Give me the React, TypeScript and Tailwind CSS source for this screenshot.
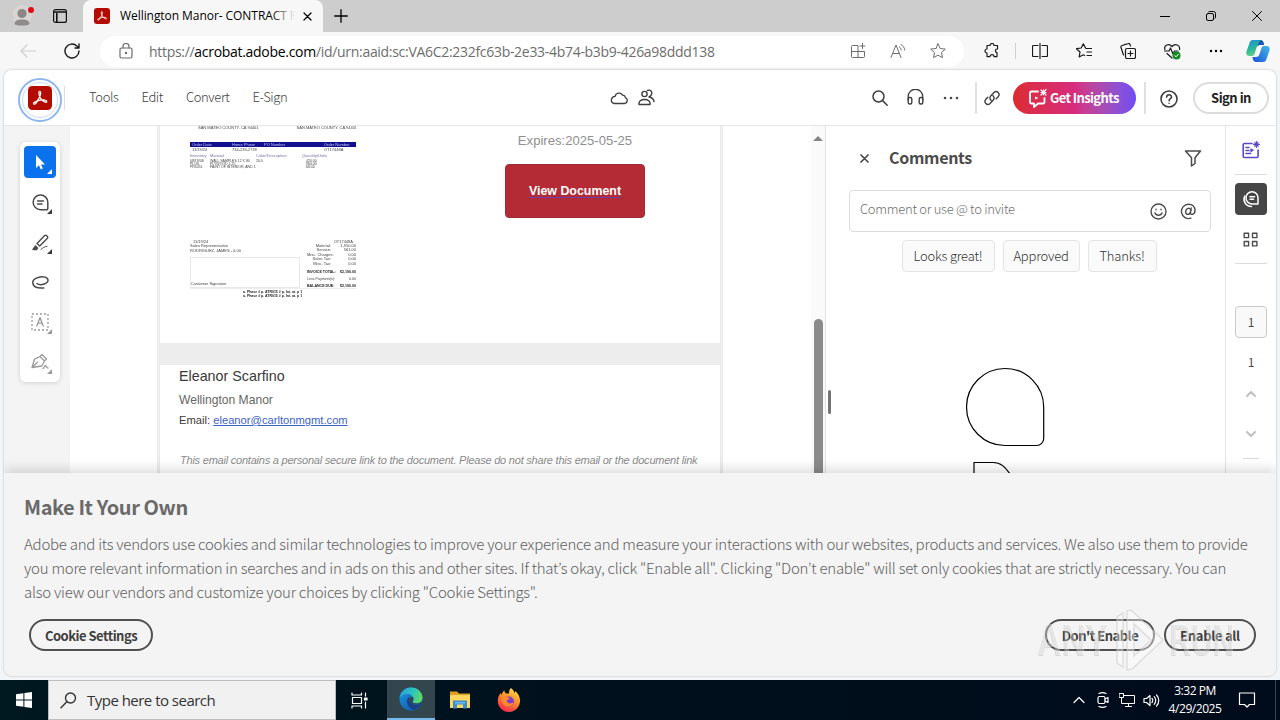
import type { ReactNode } from "react";
import { ChevronDown, ChevronUp } from "lucide-react";

type IconProps = {
  size?: number;
  box?: string;
  stroke?: number;
  className?: string;
  children: ReactNode;
};

function Icon({ size = 16, box = "0 0 16 16", stroke = 1.2, className = "", children }: IconProps) {
  return (
    <svg
      width={size}
      height={size}
      viewBox={box}
      fill="none"
      stroke="currentColor"
      strokeWidth={stroke}
      strokeLinecap="round"
      strokeLinejoin="round"
      className={`shrink-0 ${className}`}
    >
      {children}
    </svg>
  );
}

function Slot({ className = "w-11", children }: { className?: string; children?: ReactNode }) {
  return <div className={`flex shrink-0 items-center justify-center ${className}`}>{children}</div>;
}

function AcrobatLogo({ size }: { size: number }) {
  return (
    <svg width={size} height={size} viewBox="0 0 24 24" className="shrink-0">
      <rect width="24" height="24" rx="4.5" fill="#b30b00" />
      <path
        d="M11.6 5.4C10.5 5.4 10.7 8.6 12.3 11.8C13.8 14.8 17 16.8 18.5 16.1C19.5 15.2 17.8 13.9 15 13.9C11.5 13.9 6.4 15.5 5.6 17.1C5.2 18.5 7 19 8.6 16.4C10.4 13.4 12.6 9.3 12.7 7.1C12.7 6 12.3 5.4 11.6 5.4Z"
        fill="none"
        stroke="#fff"
        strokeWidth="1.25"
      />
    </svg>
  );
}

function TabStrip() {
  return (
    <div className="flex h-8 shrink-0 bg-[#cdcdcd] text-black">
      <div className="flex w-[83px] items-center pl-[13px]">
        <svg width="24" height="26" viewBox="0 0 24 26">
          <circle cx="9" cy="12" r="10" fill="#d9d5d3" />
          <circle cx="9" cy="10.5" r="4.6" fill="#8a8786" />
          <path d="M1.5 21c0-3.2 3-4.5 7.5-4.5s7.5 1.3 7.5 4.5c-2 2-13 2-15 0z" fill="#8f8b8a" />
          <circle cx="18" cy="7" r="3" fill="#e30b16" />
        </svg>
        <svg width="14" height="14" viewBox="0 0 14 14" fill="none" stroke="#111" className="ml-4">
          <rect x=".6" y=".6" width="12.8" height="12.8" rx="2" strokeWidth="1.2" />
          <path d="M1 3h12M3.8 4v9" strokeWidth="1.6" />
        </svg>
      </div>
      <div className="flex w-[240px] items-center rounded-t-lg bg-[#f7f7f7] pl-[11px]">
        <AcrobatLogo size={16} />
        <div className="relative ml-[10px] w-[175px] overflow-hidden whitespace-nowrap text-[12px] tracking-[-0.06px]">
          Wellington Manor- CONTRACT F
          <div className="absolute inset-y-0 right-0 w-6 bg-gradient-to-r from-transparent to-[#f7f7f7]" />
        </div>
        <Icon size={9} box="0 0 9 9" stroke={1.3} className="ml-2">
          <path d="M1 1l7 7M8 1l-7 7" />
        </Icon>
      </div>
      <Slot className="w-[35px]">
        <Icon size={14} box="0 0 14 14" stroke={1.3}>
          <path d="M7 .7v12.6M.7 7h12.6" />
        </Icon>
      </Slot>
      <div className="flex-1" />
      <Slot className="w-[46px]">
        <Icon size={10} box="0 0 10 10" stroke={1}>
          <path d="M0 5.5h10" />
        </Icon>
      </Slot>
      <Slot className="w-[46px]">
        <Icon size={10} box="0 0 10 10" stroke={1}>
          <rect x=".5" y="2.5" width="7" height="7" rx="1.5" />
          <path d="M2.5 1C3 .5 3.5.5 4 .5h3.5a2 2 0 0 1 2 2V6c0 .5-.2 1-.6 1.4" />
        </Icon>
      </Slot>
      <Slot className="w-[46px]">
        <Icon size={10} box="0 0 10 10" stroke={1}>
          <path d="M.5.5l9 9M9.5.5l-9 9" />
        </Icon>
      </Slot>
    </div>
  );
}

function AddressBar() {
  return (
    <div className="flex h-[38px] shrink-0 items-center bg-[#f7f7f7] text-[#1a1a1a]">
      <Slot className="w-[56px]">
        <Icon className="text-[#cfcfcf]">
          <path d="M15.5 8H1M7 2L1 8l6 6" />
        </Icon>
      </Slot>
      <Slot className="mr-[12px] w-8">
        <Icon stroke={1.4}>
          <path d="M15 8a7 7 0 1 1-2.2-5.100L15 5M15 1v4h-4" />
        </Icon>
      </Slot>
      <div className="flex h-[31px] w-[864px] items-center rounded-full bg-white pl-[19px] text-[#6d6d6d]">
        <Icon size={14} box="0 0 14 16" className="h-4">
          <rect x="1" y="5" width="12" height="10" rx="1.5" />
          <path d="M4 5V3.500a3 3 0 0 1 6 0V5" />
          <circle cx="7" cy="10" r=".6" fill="currentColor" />
        </Icon>
        <div className="ml-4 flex-1 whitespace-nowrap text-[14px] tracking-[-0.3px]">
          https://<span className="text-black">acrobat.adobe.com</span>
          /id/urn:aaid:sc:VA6C2:232fc63b-2e33-4b74-b3b9-426a98ddd138
        </div>
        <Slot className="w-10">
          <Icon stroke={1}>
            <path d="M8 14.5V2.5H2.500a1 1 0 0 0-1 1v10a1 1 0 0 0 1 1h11a1 1 0 0 0 1-1V8.500H1.500M12.500.5v5M10 3h5" />
          </Icon>
        </Slot>
        <Slot className="w-10">
          <Icon stroke={1}>
            <path d="M1 14.5L6 2l5 12.5M2.700 10.5h6.600M9.500 4c1 .6 1.500 1.500 1.600 3M11 1.500c2 1 3.500 3 3.800 5.500" />
          </Icon>
        </Slot>
        <Slot className="mr-[6px] w-10">
          <Icon stroke={1}>
            <path d="M8 .8l2.200 4.700 5.100.6-3.800 3.500 1 5.100L8 12.200l-4.500 2.500 1-5.100L.7 6.100l5.100-.6z" />
          </Icon>
        </Slot>
      </div>
      <Slot className="w-[51px] pl-1">
        <Icon>
          <path d="M3 2.500h3a2 2 0 0 1 4 0h3.500V6a1.700 1.700 0 0 0-.5 3.600v4H10a2 2 0 0 0-4 0H3V10a2 2 0 0 1 0-4z" />
        </Icon>
      </Slot>
      <div className="h-4 w-px bg-[#cfcfcf]" />
      <div className="w-[2px]" />
      <Slot>
        <Icon>
          <path d="M6 2.500H1.500a1 1 0 0 0-1 1v9a1 1 0 0 0 1 1H6M10 2.500h4.500a1 1 0 0 1 1 1v9a1 1 0 0 1-1 1H10M8 .5v15" />
        </Icon>
      </Slot>
      <Slot>
        <Icon>
          <path d="M10 5.500h5.500M11 9h4.500M11 12.500h4.500M9.500 5L7.300.8 5.200 5l-4.700.7L4 9l-.9 5 4.200-2.200L8.500 12.500" />
        </Icon>
      </Slot>
      <Slot>
        <Icon>
          <rect x="5.5" y="5.5" width="10" height="10" rx="1.5" />
          <path d="M10.500 8v5M8 10.500h5M3.500 12L1 4.500a1.500 1.500 0 0 1 1-2L8 .6a1.500 1.500 0 0 1 2 1l.5 1.400" />
        </Icon>
      </Slot>
      <Slot>
        <Icon size={17} box="0 0 17 17">
          <path d="M1 6.500C-.5 2 5 0 8 3.500 11 0 16.500 2 15.500 6.500M.5 8H5l1.500-3 2.500 6 1.500-3H14M3 10.500l5 4.500" />
          <circle cx="12.5" cy="12.5" r="4" fill="#168a24" stroke="none" />
          <path d="M10.800 12.600l1.300 1.200 2.200-2.500" stroke="#fff" strokeWidth="1" />
        </Icon>
      </Slot>
      <Slot>
        <svg width="14" height="4" viewBox="0 0 14 4">
          <circle cx="2" cy="2" r="1.2" />
          <circle cx="7" cy="2" r="1.2" />
          <circle cx="12" cy="2" r="1.2" />
        </svg>
      </Slot>
      <Slot className="w-[40px]">
        <svg width="24" height="24" viewBox="0 0 24 24">
          <defs>
            <linearGradient id="copA" x1="0" y1="0" x2=".3" y2="1">
              <stop offset="0" stopColor="#1b8fd2" />
              <stop offset=".6" stopColor="#2bb89a" />
              <stop offset="1" stopColor="#5fcf8a" />
            </linearGradient>
            <linearGradient id="copB" x1="1" y1="0" x2="0" y2="1">
              <stop offset="0" stopColor="#42b8e8" />
              <stop offset="1" stopColor="#1a53d8" />
            </linearGradient>
          </defs>
          <path d="M7 1h7.500c1.600 0 2.500 1 3 2.500L18 6h-4c-2 0-3 1-3.600 3L8.500 15c-.5 1.600-1.500 2-3 2H3.500C.8 17-.2 15 .5 12.500l3-8.500C4 2.300 5 1 7 1z" fill="url(#copA)" />
          <path d="M17 23H10c-1.600 0-2.500-1-3-2.500L6.400 18H10c2 0 3-1 3.600-3l1.900-6c.5-1.600 1.500-2 3-2h2c2.700 0 3.700 2 3 4.500l-3 8.500c-.5 1.700-1.500 3-3.500 3z" fill="url(#copB)" />
          <path d="M14 1.200c2 0 3 .8 3.500 2.300L18 6h-4c-1.300 0-2.300.5-3 1.500z" fill="#1956b8" />
        </svg>
      </Slot>
    </div>
  );
}

function AppHeader() {
  return (
    <header className="flex h-[56px] shrink-0 items-center border-b border-[#e6e6e6] bg-white text-[#3f3f3f]">
      <div className="ml-[14px] mt-[5px] flex size-[44px] items-center justify-center rounded-full border-2 border-[#8db7ee]">
        <div className="flex size-[36px] items-center justify-center rounded-full border border-[#c9dcf6] pb-[4px]">
          <AcrobatLogo size={24} />
        </div>
      </div>
      <div className="ml-[2px] h-6 w-px bg-[#dcdcdc]" />
      <nav className="ml-6 flex w-[521px] gap-[23px] whitespace-nowrap pb-[2px] text-[13px] font-light leading-none tracking-[-0.4px]">
        <span>Tools</span>
        <span>Edit</span>
        <span>Convert</span>
        <span>E-Sign</span>
      </nav>
      <Icon size={18} box="0 0 18 16" stroke={1.3}>
        <path d="M4 13.500h10.500a3 3 0 0 0 .8-5.800 2.600 2.600 0 0 0-2.800-2.500 4 4 0 0 0-7.400 1.200C1 6.300-.2 12.500 4 13.500z" />
      </Icon>
      <Icon size={17} box="0 0 17 17" stroke={1.4} className="ml-[10px]">
        <circle cx="6.5" cy="5" r="2.6" />
        <path d="M1 15.500c-.5-3.500 2-5 5.500-5s6 1.500 5.500 5zM9.500 1.500c3-1.200 5 1 4 4-.3 1-1.500 2-2.500 2.500 3 .3 4.500 2 5 4.500" />
      </Icon>
      <div className="flex-1" />
      <Icon stroke={1.5}>
        <circle cx="6.5" cy="6.5" r="5.5" />
        <path d="M10.600 10.600L15.200 15.200" />
      </Icon>
      <Icon size={17} box="0 0 17 17" stroke={1.4} className="ml-[19px]">
        <path d="M1.200 11V7.500a7 7 0 0 1 14.500 0V11" />
        <rect x="1.2" y="8.5" width="3.6" height="6.5" rx="1.5" />
        <rect x="12.2" y="8.5" width="3.6" height="6.5" rx="1.5" />
      </Icon>
      <svg width="16" height="4" viewBox="0 0 16 4" fill="#4a4a4a" className="ml-[19px]">
        <circle cx="2" cy="2" r="1.3" />
        <circle cx="8" cy="2" r="1.3" />
        <circle cx="14" cy="2" r="1.3" />
      </svg>
      <div className="ml-4 h-8 w-[2px] bg-[#e0e0e0]" />
      <Icon stroke={1.4} className="ml-[7px]">
        <path d="M7 10.200a3 3 0 0 1-.3-4.300l3.500-3.700a3 3 0 0 1 4.200 4.200l-2.200 2.300M9 5.800a3 3 0 0 1 .3 4.300l-3.500 3.700A3 3 0 0 1 1.600 9.600L3.800 7.300" />
      </Icon>
      <button className="ml-[13px] flex h-8 w-[123px] items-center rounded-full bg-gradient-to-r from-[#dc2a2e] via-[#d72c7c] via-50% to-[#6f4cf5] pl-[15px] text-[13px] font-bold leading-none tracking-[-0.6px] text-white">
        <Icon size={20} box="0 0 20 20" stroke={1.8}>
          <path d="M10 3.500H3.500A1.500 1.500 0 0 0 2 5v9a1.500 1.500 0 0 0 1.500 1.500H6V19l4-3.500h5a1.500 1.500 0 0 0 1.500-1.500v-4" />
          <path d="M15.500 1l1 2.500 2.500 1-2.500 1-1 2.500-1-2.500-2.500-1 2.500-1zM7 8.500l3.500 1.500L7 11.500z" fill="currentColor" stroke="none" />
          <path d="M13 2l5 5M18 1.500l-5 5.500" strokeWidth="1.2" />
        </Icon>
        <span className="ml-[2px] whitespace-nowrap pb-[1px]">Get Insights</span>
      </button>
      <div className="ml-[8px] h-8 w-[2px] bg-[#e0e0e0]" />
      <Icon size={18} box="0 0 18 18" stroke={1.6} className="ml-[14px] mt-[2px]">
        <circle cx="9" cy="9" r="8" />
        <path d="M6.700 7.100C6.700 4 11.500 4 11.500 7c0 1.800-2.400 1.700-2.400 3.800M9.100 13.200v.1" />
      </Icon>
      <button className="ml-[15px] mr-[7px] h-8 w-[76px] whitespace-nowrap rounded-full border-2 border-[#dcdcdc] text-[13px] font-bold leading-none tracking-[-0.5px] text-[#222]">
        Sign in
      </button>
    </header>
  );
}

function Corner({ className = "" }: { className?: string }) {
  return (
    <svg width="5" height="5" viewBox="0 0 5 5" className={`absolute bottom-[8px] right-[8px] ${className}`}>
      <path d="M5 0v5H0z" fill="currentColor" />
    </svg>
  );
}

function ToolPalette() {
  return (
    <div className="flex w-[66px] shrink-0 bg-[#f4f4f4] pl-4 pt-4">
      <div className="h-[240px] w-10 rounded-md bg-white text-[#4b4b4b] shadow-[0_1px_5px_rgba(0,0,0,0.14)] *:relative *:flex *:h-10 *:items-center *:justify-center">
        <div>
          <div className="flex size-8 items-center justify-center rounded bg-[#0b72ee]">
            <svg width="12" height="17" viewBox="0 0 12 17" fill="#fff">
              <path d="M2 1v13l3-2.800 1.800 4.300 2-.9L7 10.500h4z" />
            </svg>
          </div>
          <Corner className="text-white" />
        </div>
        <div>
          <Icon size={17} box="0 0 17 17" stroke={1.5}>
            <path d="M8.500 1a7.300 7.300 0 0 1 7.300 7.300v6.200a1.200 1.200 0 0 1-1.200 1.200H8.500A7.300 7.300 0 0 1 8.500 1zM5.500 7h6M5.500 10H10" />
          </Icon>
          <Corner className="text-[#3a3a3a]" />
        </div>
        <div>
          <Icon size={17} box="0 0 17 17" stroke={1.4}>
            <path d="M5 9.500L12.700 1.600a1.200 1.200 0 0 1 1.700 0l1 1a1.200 1.200 0 0 1 0 1.700L7.700 12z" />
            <path d="M3.500 12l2 2-1 1.500H1z" fill="currentColor" />
            <path d="M9 15.500c1.500-1.500 3.500-3 6-3.200" strokeWidth="1" />
          </Icon>
          <Corner className="text-[#3a3a3a]" />
        </div>
        <div>
          <Icon size={17} box="0 0 17 17" stroke={1.5}>
            <path d="M5 9.500C8 12 16 10 16 6.300 16 3 11 2.200 7 3.200 2 4.400.5 7.200.8 9.200c.4 3.300 4.500 5.300 11 4.800" />
          </Icon>
        </div>
        <div className="text-[#9b9b9b]">
          <Icon size={18} box="0 0 18 18" stroke={1.3}>
            <rect x="1" y="1" width="16" height="16" strokeDasharray="2 2" strokeLinecap="butt" />
            <path d="M5.800 13L9 4.500l3.200 8.500M7 10.200h4" />
          </Icon>
          <Corner />
        </div>
        <div className="text-[#9b9b9b]">
          <Icon size={18} box="0 0 18 18" stroke={1.3}>
            <path d="M1 14.500l2.500-8.300L9 3.500l4.500 4.500-2.700 5zM9 3.500L11 1.500l4.500 4.500-2 2M1 14.500l5.500-5.200M12 15.500c1 0 1.500-3 2.500-3s.2 2.500 2.500 2.500" />
          </Icon>
          <Corner />
        </div>
      </div>
    </div>
  );
}

const columns = ["Order Date", "Home Phone", "PO Number", "Order Number"];

const charges = [
  ["Material:", "1,950.00"],
  ["Service:", "561.00"],
  ["Misc. Charges:", "0.00"],
  ["Sales Tax:", "0.00"],
  ["Misc. Tax:", "0.00"],
];

const items = [
  ["08/19/08", "WALL SAMPLES 12 X 80", "20.0", "420.00"],
  ["PLUS", "PLYWOOD 1.25", "", "960.00"],
  ["PR5051", "PAINT OF INTERIOR, AND 1", "", "68.00"],
];

// Scaled-down invoice shown as the attachment preview
function InvoiceThumb() {
  return (
    <div className="ml-[30px] w-[166px] whitespace-nowrap text-[4px] leading-[4px] text-[#444] blur-[0.3px]">
      <div className="flex h-[3px] items-end gap-[38px] overflow-hidden pl-2">
        <span className="leading-[2px]">SAN MATEO COUNTY, CA 94401</span>
        <span className="leading-[2px]">SAN MATEO COUNTY, CA 94401</span>
      </div>
      <div className="mt-[13px] grid h-[5px] grid-cols-[40px_32px_60px_1fr] items-center bg-[#13108f] pl-[2px] text-[#c4c4f5]">
        {columns.map((c) => (
          <span key={c}>{c}</span>
        ))}
      </div>
      <div className="mt-[1px] grid grid-cols-[40px_92px_1fr] pl-[2px]">
        <span>11/19/24</span>
        <span>734-239-2739</span>
        <span>OT17448A</span>
      </div>
      <div className="mt-[2px] grid grid-cols-[20px_46px_46px_1fr] text-[#7772a0]">
        <span>Inventory</span>
        <span>Material</span>
        <span>Color/Description</span>
        <span>Quantity/Units</span>
      </div>
      <div className="mt-[2px] leading-[3px]">
        {items.map((row) => (
          <div key={row[0]} className="grid h-[3px] grid-cols-[20px_46px_50px_1fr] text-[3.5px]">
            {row.map((cell, i) => (
              <span key={i}>{cell}</span>
            ))}
          </div>
        ))}
      </div>
      <div className="mt-[71px] flex justify-between px-[3px]">
        <span>11/19/24</span>
        <span>OT17448A</span>
      </div>
      <div className="flex border-b border-[#eee]">
        <div className="w-[110px]">
          <div className="h-[5px]">Sales Representative</div>
          <div className="h-[8px]">RODRIGUEZ, JAMES - 0.00</div>
          <div className="flex h-[31px] items-end border border-[#e8e8e8] pb-[1px]">Customer Signature</div>
        </div>
        <div className="flex-1 pl-[7px]">
          {charges.map(([label, value]) => (
            <div key={label} className="flex h-[4.4px]">
              <span className="w-[24px] text-right">{label}</span>
              <span className="flex-1 text-right">{value}</span>
            </div>
          ))}
          <div className="mt-[4px] flex justify-between text-[3.6px] font-bold text-[#222]">
            <span>INVOICE TOTAL:</span>
            <span>$2,190.00</span>
          </div>
          <div className="mt-[3px] flex justify-between text-[3.6px]">
            <span>Less Payment(s):</span>
            <span>0.00</span>
          </div>
          <div className="mt-[3px] flex justify-between text-[3.6px] font-bold text-[#222]">
            <span>BALANCE DUE:</span>
            <span>$2,190.00</span>
          </div>
        </div>
      </div>
      <div className="mt-[2px] pl-[53px] text-[3.5px] font-bold leading-[3.5px] text-[#222]">
        <div>a. Phase # p. ATR015 # p. Int. at. p 1</div>
        <div>a. Phase # p. ATR015 # p. Int. at. p 1</div>
      </div>
    </div>
  );
}

function DocumentView() {
  return (
    <div className="flex w-[756px] shrink-0 bg-white font-['Liberation_Sans',Arial,sans-serif]">
      <div className="ml-[87px] w-[566px] overflow-hidden border-x-[3px] border-[#ececec] bg-white">
        <div className="flex h-[217px]">
          <InvoiceThumb />
          <div className="ml-[149px] w-[140px]">
            <div className="mt-[6px] text-center text-[13.1px] leading-[18px] text-[#8f8f8f]">Expires:2025-05-25</div>
            <div className="mt-[14px] flex h-[54px] items-center justify-center rounded-sm border border-[#a12c38] bg-[#b52b35] text-[12.4px] font-bold text-white">
              <span className="pt-[1px] underline decoration-[#6a3fb0] decoration-1 underline-offset-[2px]">
                View Document
              </span>
            </div>
          </div>
        </div>
        <div className="h-[22px] bg-[#ededed]" />
        <div className="whitespace-nowrap pl-[19px] text-[#3a3a3a]">
          <div className="pt-[1px] text-[14.3px] leading-[20px]">Eleanor Scarfino</div>
          <div className="mt-[4px] text-[12.1px] leading-[20px] text-[#666]">Wellington Manor</div>
          <div className="text-[11.2px] leading-[20px]">
            Email: <span className="text-[#3c62c8] underline">eleanor@carltonmgmt.com</span>
          </div>
          <div className="mt-[20px] pl-[1px] text-[11px] italic leading-[20px] tracking-[-0.22px] text-[#8b8b8b]">
            This email contains a personal secure link to the document. Please do not share this email or the document link
          </div>
        </div>
      </div>
      <div className="ml-auto flex w-[15px] flex-col items-center border-r border-[#e2e2e2] bg-[#fafafa] pt-[10px]">
        <svg width="10" height="5" viewBox="0 0 10 5">
          <path d="M5 0l5 5H0z" fill="#858585" />
        </svg>
        <div className="mt-[178px] w-[9px] flex-1 rounded-t-full bg-[#8b8b8b]" />
      </div>
    </div>
  );
}

function CommentsPanel() {
  return (
    <div className="flex w-[400px] shrink-0 border-r border-[#e4e4e4] bg-white text-[#4b4b4b]">
      <div className="flex w-[23px] items-start pl-[2px] pt-[264px]">
        <div className="h-6 w-[3px] rounded-full bg-[#747474]" />
      </div>
      <div className="w-[362px]">
        <div className="flex h-16 items-center pl-[11px]">
          <Icon size={9} box="0 0 9 9" stroke={1.7}>
            <path d="M1 1l7 7M8 1l-7 7" />
          </Icon>
          <h2 className="ml-5 flex-1 pb-[2px] text-[16px] font-bold leading-none tracking-[-0.3px]">Comments</h2>
          <Icon size={18} box="0 0 18 18" stroke={1.5} className="mr-[9px]">
            <path d="M1.500 2h15L11 8.700v5.800L7.500 17V8.700z" />
          </Icon>
        </div>
        <div className="flex h-[42px] items-center rounded border border-[#dcdcdc] pl-[10px] pr-[13px]">
          <span className="flex-1 pb-[5px] text-[13px] font-light leading-none tracking-[-0.28px] text-[#707070]">
            Comment or use @ to invite
          </span>
          <Icon size={17} box="0 0 17 17" stroke={1.4}>
            <circle cx="8.5" cy="8.5" r="7.5" />
            <path d="M5 10c1 3 6 3 7 0M6 6.200v.6M11 6.200v.6" />
          </Icon>
          <Icon size={17} box="0 0 17 17" stroke={1.4} className="ml-[13px]">
            <path d="M11.200 5l-.8 5c-.3 2.200 4.600 2 4.600-2.500 0-4-3-6.300-6.500-6.300a7.200 7.200 0 1 0 2.500 14" />
            <path d="M10.800 7.500C10.500 4.300 6 4.500 5.700 8.800c-.2 3.500 4 3.200 4.800.2" />
          </Icon>
        </div>
        <div className="mr-[2px] mt-2 flex justify-center gap-2 whitespace-nowrap text-[13px] font-light leading-none tracking-[-0.2px] text-[#333] *:flex *:h-8 *:items-center *:justify-center *:rounded *:border *:border-[#e4e4e4] *:bg-[#fafafa] *:pb-[2px]">
          <div className="w-[93px]">Looks great!</div>
          <div className="w-[77px]">Approved</div>
          <div className="w-[69px]">Thanks!</div>
        </div>
        <svg width="82" height="106" viewBox="0 0 82 106" fill="none" stroke="#000" strokeWidth="1.2" className="ml-[116px] mt-[95px]">
          <path d="M40 1.500a38.700 38.700 0 0 1 38.700 38.700V71.500a7 7 0 0 1-7 7H40A38.500 38.500 0 0 1 40 1.500z" />
          <path d="M9 120V95.500H28C36 95.500 40 100 45 107" />
        </svg>
      </div>
    </div>
  );
}

function Rail() {
  return (
    <div className="flex flex-1 flex-col items-center bg-white text-[12px] text-[#4b4b4b]">
      <Slot className="h-12">
        <Icon size={18} box="0 0 18 18" stroke={1.6} className="text-[#5a49c8]">
          <path d="M10 2.500H2.500A1.300 1.300 0 0 0 1.200 3.800v11.400a1.300 1.300 0 0 0 1.300 1.300h12.300a1.300 1.300 0 0 0 1.300-1.300V9M4 6.500h3M4 9.500h3M4 12.500h4.500" />
          <path d="M14.500 0l.9 2.500 2.500.9-2.500 1-.9 2.500-1-2.500-2.500-1 2.500-.9zM12.500 1.500l4 4M16.500 1l-4 4.500M9 8l2.500 1L9 11z" fill="currentColor" strokeWidth=".8" />
        </Icon>
      </Slot>
      <div className="h-px w-8 bg-[#dcdcdc]" />
      <div className="mt-2 flex size-8 items-center justify-center rounded bg-[#464646] text-white">
        <Icon size={18} box="0 0 18 18" stroke={1.5}>
          <path d="M10 1.800a5.900 5.900 0 0 1 6 6v6.100h-6a6 6 0 0 1 0-12.100zM8 6.700h4.500M8 9.300H11.500" />
          <path d="M2.800 6C.5 10.500 3.500 16.500 9.500 16.500" />
        </Icon>
      </div>
      <Slot className="h-12">
        <Icon size={16} stroke={1.4} className="mt-[1px]">
          <rect x="1.2" y="1.2" width="4.4" height="4.4" />
          <rect x="9.5" y="1.2" width="4.4" height="4.4" />
          <rect x="1.2" y="9.5" width="4.4" height="4.4" />
          <rect x="9.5" y="9.5" width="4.4" height="4.4" />
        </Icon>
      </Slot>
      <div className="h-px w-8 bg-[#dcdcdc]" />
      <div className="mt-[42px] flex size-8 items-center justify-center rounded border border-[#cacaca] bg-[#f9f9f9] leading-none">
        1
      </div>
      <Slot className="h-12 leading-none">1</Slot>
      <Slot className="h-4 text-[#c0c0c0]">
        <ChevronUp size={16} strokeWidth={3} />
      </Slot>
      <Slot className="mt-2 h-12 text-[#c0c0c0]">
        <ChevronDown size={16} strokeWidth={3} />
      </Slot>
      <div className="h-px w-4 bg-[#d8d8d8]" />
    </div>
  );
}

function Watermark() {
  return (
    <div className="pointer-events-none absolute right-[40px] top-[136px] flex h-[62px] w-[198px] items-center justify-between font-['Liberation_Sans',Arial,sans-serif] text-[44px] font-bold leading-none text-white/35 [text-shadow:-1px_1px_1px_rgba(0,0,0,0.12)]">
      <span className="inline-block w-[72px] origin-left scale-x-[0.76]">ANY</span>
      <svg width="48" height="62" viewBox="0 0 48 62" fill="none" stroke="rgba(200,200,200,.5)" strokeWidth="1.5">
        <path d="M1 8l6-4v54l-6-4z" fill="rgba(255,255,255,.35)" />
        <path d="M11 2l4-1 32 30-31 29-5 1zM18 15v32l17-16z" fill="rgba(255,255,255,.4)" fillRule="evenodd" />
      </svg>
      <span className="inline-block w-[66px] origin-left scale-x-[0.68]">RUN</span>
    </div>
  );
}

function CookieBanner() {
  return (
    <section className="relative flex h-[203px] shrink-0 flex-col bg-[#f4f4f4] pl-5 pr-5 pt-[22px] text-[#606060] shadow-[0_-3px_12px_rgba(0,0,0,0.16)]">
      <h1 className="text-[20px] font-bold leading-6 tracking-[-0.42px] text-[#6a6a6a]">Make It Your Own</h1>
      <p className="mt-[13px] whitespace-nowrap text-[15px] font-light leading-6 tracking-[-0.25px]">
        Adobe and its vendors use cookies and similar technologies to improve your experience and measure your
        interactions with our websites, products and services. We also use them to provide
        <br />
        you more relevant information in searches and in ads on this and other sites. If that’s okay, click "Enable
        all". Clicking "Don’t enable" will set only cookies that are strictly necessary. You can
        <br />
        also view our vendors and customize your choices by clicking "Cookie Settings".
      </p>
      <div className="mt-[15px] flex pl-[5px] text-[13px] font-bold leading-none tracking-[-0.5px] text-[#3f3f3f] *:h-8 *:whitespace-nowrap *:rounded-full *:border-2 *:border-[#505050]">
        <button className="mr-auto w-[124px]">Cookie Settings</button>
        <button className="mr-[9px] w-[110px]">Don't Enable</button>
        <button className="w-[92px] tracking-[-0.3px]">Enable all</button>
      </div>
      <Watermark />
    </section>
  );
}

function Taskbar() {
  return (
    <div className="flex h-10 shrink-0 items-center bg-gradient-to-r from-[#001820] via-[#00101c] to-[#000b1c] text-white">
      <Slot className="w-12">
        <svg width="16" height="16" viewBox="0 0 16 16" fill="#fff">
          <path d="M0 2.200L7.400 1.200V7.500H0zM8.400 1L16 0v7.500H8.400zM0 8.500h7.400v6.300L0 13.800zM8.400 8.500H16V16l-7.600-1.100z" />
        </svg>
      </Slot>
      <div className="flex h-10 w-[288px] items-center border border-[#bdbdbd] bg-[#f1f1f1] pl-[11px] text-[15px] text-[#333]">
        <Icon size={17} box="0 0 17 17" stroke={1.4}>
          <circle cx="10.5" cy="6" r="5" />
          <path d="M6.800 9.700L1 15.800" />
        </Icon>
        <span className="ml-[10px] whitespace-nowrap tracking-[-0.52px]">Type here to search</span>
      </div>
      <Slot className="w-[51px] pr-[4px]">
        <Icon size={17} box="0 0 17 17" stroke={1.2}>
          <path d="M1 1v2h9.500V1M1 16v-2h9.500v2M1.500 5.500h9v6h-9zM14.500 1v3M14.500 10v6" />
          <path d="M13.500 6h2.500v2h-2.500z" fill="currentColor" />
        </Icon>
      </Slot>
      <div className="flex h-10 w-12 items-center justify-center border-b-2 border-[#76b9ed] bg-[#33464e]">
        <svg width="24" height="24" viewBox="0 0 24 24">
          <defs>
            <linearGradient id="edgeTop" x1="0" y1=".3" x2="1" y2=".6">
              <stop offset="0" stopColor="#2a9fd8" />
              <stop offset=".5" stopColor="#2bc3c4" />
              <stop offset="1" stopColor="#5fdc5a" />
            </linearGradient>
            <linearGradient id="edgeLow" x1="0" y1="0" x2="1" y2="1">
              <stop offset="0" stopColor="#1e9be2" />
              <stop offset="1" stopColor="#0c4ba0" />
            </linearGradient>
          </defs>
          <circle cx="12" cy="12" r="11.5" fill="url(#edgeLow)" />
          <path d="M.6 11C1.500 4.500 6.500.5 12 .5c7 0 11.500 5 11.500 10 0 3.500-2.500 6-6 6-2.500 0-4.200-1-4-2 .2-.7 1-1 1-2.700 0-2.500-2.500-4.800-6-4.800-3 0-6.500 1.500-7.900 4z" fill="url(#edgeTop)" />
          <path d="M9.500 10c-3 4-1 11 5 12.700 3-.7 6-3 7.200-5.700-4 2-9.500 1.200-11-2.500-.7-1.700-.2-3.500-1.200-4.500z" fill="#1a3f86" />
          <path d="M10.500 10.500c2-2 4 0 4 1.500 0 1.200-1 1.700-1 2.500s1 2 4 2c1.500 0 3-.5 4-1.500l.5 1.300C17 19 11.500 17 10.500 14.500z" fill="#33464e" />
        </svg>
      </div>
      <Slot className="w-[50px]">
        <svg width="22" height="20" viewBox="0 0 22 20">
          <path d="M1 1.500h7l2 2h11v4H1z" fill="#e0a025" />
          <path d="M1 5h20v13H1z" fill="#ffd75e" />
          <path d="M4 18.500v-8h14v8h-4v-4H8v4z" fill="#3b8fd0" />
          <path d="M6 12h10v1.500H6z" fill="#6fb8ea" />
        </svg>
      </Slot>
      <Slot className="w-[48px]">
        <svg width="24" height="24" viewBox="0 0 24 24">
          <defs>
            <linearGradient id="fox" x1=".8" y1="0" x2=".3" y2="1">
              <stop offset="0" stopColor="#ffe14a" />
              <stop offset=".45" stopColor="#ff9226" />
              <stop offset="1" stopColor="#f5264e" />
            </linearGradient>
          </defs>
          <path d="M14 0c2 1.500 3 3 3.300 5 .8-.5 1-1.200 1-2 3 2.500 5 6 4.700 10.500C22.500 19.500 17.500 24 12 24 5.500 24 .8 19 .8 13 .8 9.500 2 7 3.800 5c0 .8.200 1.500.7 2 .3-2 1.500-3.500 3-4.500 0 1 .3 2 1.200 2.700 1.300.3 2 .2 3.300.4C12 3 12.500 1.200 14 0z" fill="url(#fox)" />
          <circle cx="12" cy="13.5" r="5" fill="#7a3fd0" />
          <path d="M4.500 9c2-1.500 4-1 5 .2 1.500.2 3 .3 3 1.300-.3 1.200-2 1-3 2 .5 3 4.500 4 7.500 1.500-1 3-3.500 4.500-6 4.500-4 0-6.500-4-6.500-9.500z" fill="#ff8a2a" />
        </svg>
      </Slot>
      <div className="flex-1" />
      <Slot className="w-6">
        <Icon size={12} box="0 0 12 12">
          <path d="M1 8.500l5-5 5 5" />
        </Icon>
      </Slot>
      <Slot className="w-6">
        <Icon>
          <rect x="3" y="4.5" width="7" height="7" rx="1.5" />
          <path d="M10 7l3-1.500v5L10 9M4 1.500c2-1 5-1 7 0M4 14.500c2 1 5 1 7 0" />
        </Icon>
      </Slot>
      <Slot className="w-6">
        <Icon>
          <path d="M5 3.500h10.500v8H4M9.500 11.500v3M6.500 14.500h6M.5 1.500h4v4h-4zM2.500 5.500v6h2" strokeWidth="1" />
        </Icon>
      </Slot>
      <Slot className="w-6">
        <Icon size={17} box="0 0 17 16">
          <path d="M1 6v4h2.500L7 13V3L3.500 6zM9 6c1 1 1 3 0 4M11.200 4.200c2 2 2 5.600 0 7.600M13.500 2.500c3 3 3 8 0 11" />
        </Icon>
      </Slot>
      <div className="flex w-16 flex-col items-center whitespace-nowrap text-[12px] leading-[18px] tracking-[-0.45px]">
        <span>3:32 PM</span>
        <span>4/29/2025</span>
      </div>
      <Slot className="w-10">
        <Icon size={18} box="0 0 18 18">
          <path d="M1.500 2h15v11.500h-5L9 16l-2.500-2.500h-5z" />
        </Icon>
      </Slot>
      <div className="ml-[8px] mr-[4px] h-10 w-px bg-[#3c4650]" />
    </div>
  );
}

export default function App() {
  return (
    <div className="flex h-[720px] w-[1280px] flex-col overflow-hidden bg-[#f3f6f9] font-['Open_Sans','Noto_Sans',sans-serif]">
      <TabStrip />
      <AddressBar />
      <div className="mx-1 mb-1 flex h-[606px] flex-col overflow-hidden rounded-lg bg-white font-['Noto_Sans_CJK_JP','Noto_Sans',sans-serif] shadow-[0_0_2px_rgba(0,0,0,0.35)]">
        <AppHeader />
        <div className="flex h-[347px] shrink-0 overflow-hidden">
          <ToolPalette />
          <DocumentView />
          <CommentsPanel />
          <Rail />
        </div>
        <CookieBanner />
      </div>
      <Taskbar />
    </div>
  );
}
